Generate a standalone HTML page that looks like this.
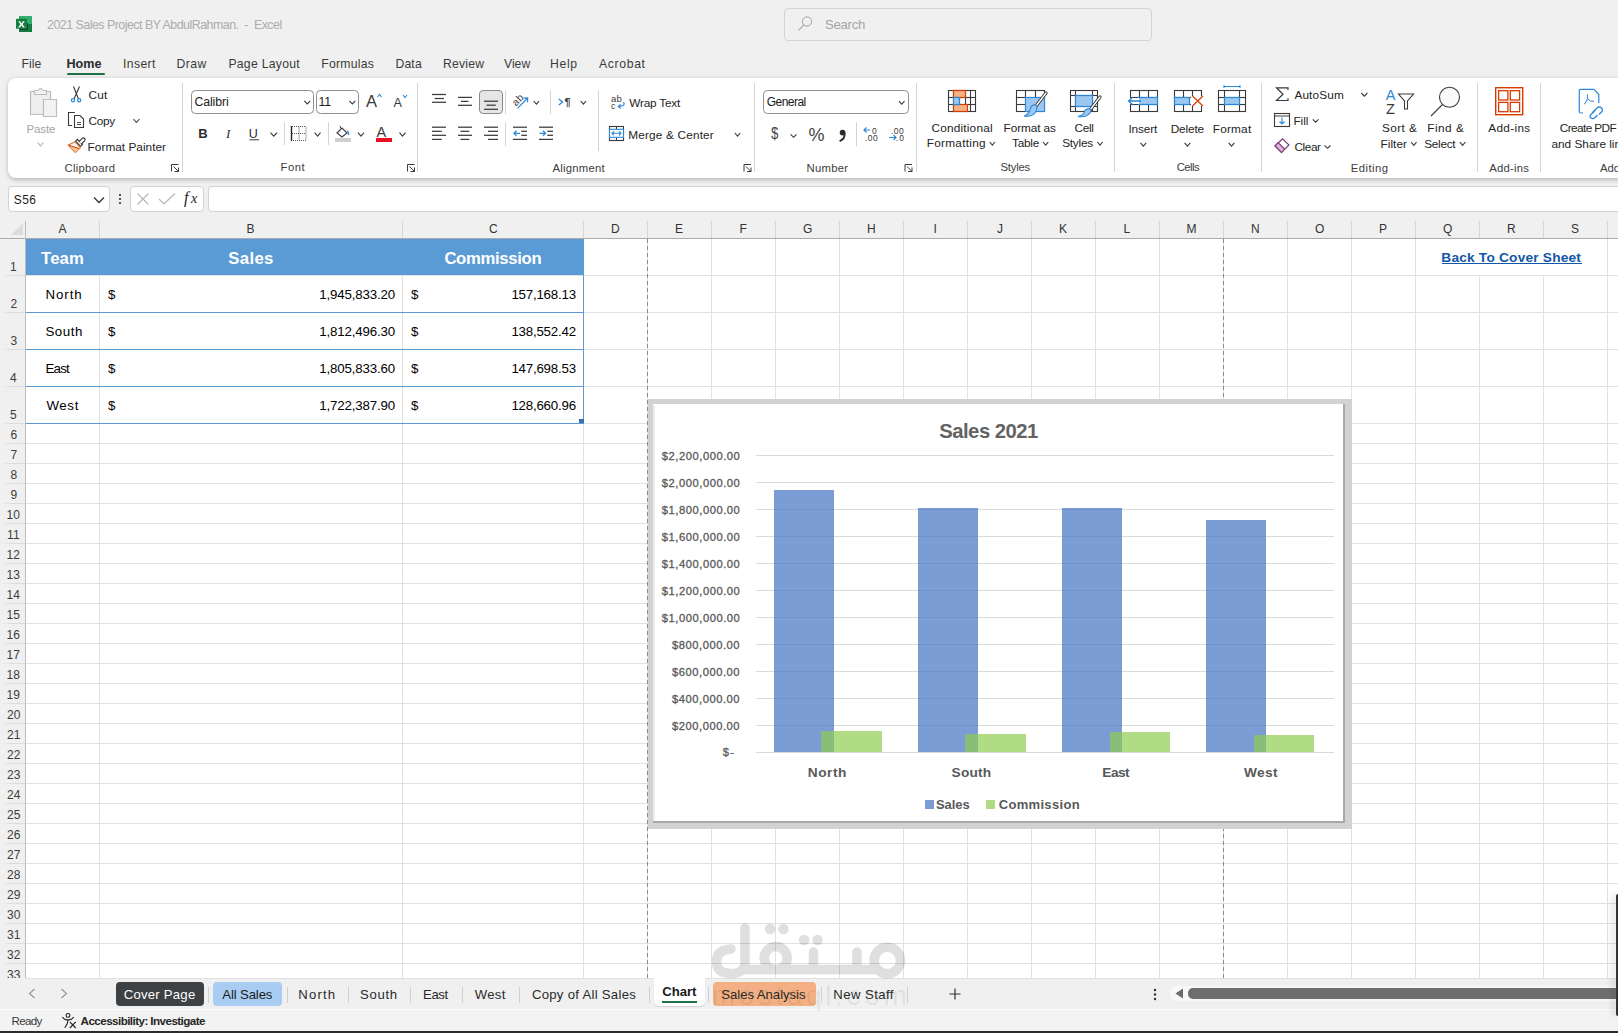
<!DOCTYPE html>
<html><head><meta charset="utf-8"><title>Excel</title>
<style>
html,body{margin:0;padding:0;width:1618px;height:1033px;overflow:hidden;background:#f0f0f0;}
.b{position:absolute;}
.t{position:absolute;white-space:pre;font-family:"Liberation Sans",sans-serif;}
</style></head><body>
<div class='b' style='left:0px;top:0px;width:1618px;height:1033px;background:#f0f0f0'></div>
<svg class='b' style='left:15px;top:15px;' width='18' height='18' viewBox='0 0 18 18'><rect x='4' y='1' width='13' height='16' fill='#107c41'/><rect x='4' y='1' width='13' height='8' fill='#33b06f'/><path d='M4.5 14.2 H12.2 V8' fill='none' stroke='#1f1f1f' stroke-width='1'/><rect x='1' y='3.8' width='11' height='10' rx='0.6' fill='#14803f'/><path d='M3.2 6.3 L5 6.3 L6.5 8.4 L8 6.3 L9.8 6.3 L7.5 9.3 L9.9 12.4 L8 12.4 L6.5 10.3 L5 12.4 L3.1 12.4 L5.5 9.3 Z' fill='#fff'/></svg>
<div class='b' style='left:784px;top:8px;width:368px;height:33px;border:1px solid #d4d4d4;border-radius:4px;box-sizing:border-box;background:#f0f0f0'></div>
<svg class='b' style='left:797px;top:16px;' width='16' height='16' viewBox='0 0 16 16'><circle cx='10' cy='5.5' r='4.6' fill='none' stroke='#a2a2a2' stroke-width='1'/><path d='M6.8 8.8 L1.5 14.5' stroke='#a2a2a2' stroke-width='1.1'/></svg>
<div class='b' style='left:67px;top:73px;width:38px;height:2px;background:#1e7145;border-radius:1px'></div>
<div class='b' style='left:8px;top:78px;width:1632px;height:100px;background:#fff;border-radius:8px;box-shadow:0 1.5px 4px rgba(0,0,0,0.22)'></div>
<div class='b' style='left:8px;top:186px;width:102px;height:26px;background:#fff;border:1px solid #d2d2d2;border-radius:4px;box-sizing:border-box'></div>
<svg class='b' style='left:93px;top:196px;' width='12' height='8' viewBox='0 0 12 8'><path d='M1 1.5 L6 6.5 L11 1.5' fill='none' stroke='#333' stroke-width='1.3'/></svg>
<svg class='b' style='left:117px;top:193px;' width='6' height='12' viewBox='0 0 6 12'><circle cx='3' cy='2' r='1.1' fill='#333'/><circle cx='3' cy='6' r='1.1' fill='#333'/><circle cx='3' cy='10' r='1.1' fill='#333'/></svg>
<div class='b' style='left:130px;top:186px;width:74px;height:26px;background:#fff;border:1px solid #d2d2d2;border-radius:4px;box-sizing:border-box'></div>
<svg class='b' style='left:136px;top:192px;' width='14' height='14' viewBox='0 0 14 14'><path d='M1.5 1.5 L12.5 12.5 M12.5 1.5 L1.5 12.5' stroke='#b5b5b5' stroke-width='1.1'/></svg>
<svg class='b' style='left:158px;top:192px;' width='18' height='14' viewBox='0 0 18 14'><path d='M1 7 L6 12 L17 1.5' fill='none' stroke='#b5b5b5' stroke-width='1.1'/></svg>
<div class='b' style='left:208px;top:186px;width:1432px;height:26px;background:#fff;border:1px solid #d2d2d2;border-radius:4px 0 0 4px;box-sizing:border-box'></div>
<div class='b' style='left:0px;top:212px;width:1618px;height:26px;background:#f0f0f0'></div>
<div class='b' style='left:26px;top:239px;width:1592px;height:739px;background:#fff'></div>
<div class='b' style='left:99px;top:239px;width:1px;height:739px;background:#e1e1e1'></div><div class='b' style='left:99px;top:221px;width:1px;height:17px;background:#d6d6d6'></div><div class='b' style='left:402px;top:239px;width:1px;height:739px;background:#e1e1e1'></div><div class='b' style='left:402px;top:221px;width:1px;height:17px;background:#d6d6d6'></div><div class='b' style='left:583px;top:239px;width:1px;height:739px;background:#e1e1e1'></div><div class='b' style='left:583px;top:221px;width:1px;height:17px;background:#d6d6d6'></div><div class='b' style='left:647px;top:239px;width:1px;height:739px;background:#e1e1e1'></div><div class='b' style='left:647px;top:221px;width:1px;height:17px;background:#d6d6d6'></div><div class='b' style='left:711px;top:239px;width:1px;height:739px;background:#e1e1e1'></div><div class='b' style='left:711px;top:221px;width:1px;height:17px;background:#d6d6d6'></div><div class='b' style='left:775px;top:239px;width:1px;height:739px;background:#e1e1e1'></div><div class='b' style='left:775px;top:221px;width:1px;height:17px;background:#d6d6d6'></div><div class='b' style='left:839px;top:239px;width:1px;height:739px;background:#e1e1e1'></div><div class='b' style='left:839px;top:221px;width:1px;height:17px;background:#d6d6d6'></div><div class='b' style='left:903px;top:239px;width:1px;height:739px;background:#e1e1e1'></div><div class='b' style='left:903px;top:221px;width:1px;height:17px;background:#d6d6d6'></div><div class='b' style='left:967px;top:239px;width:1px;height:739px;background:#e1e1e1'></div><div class='b' style='left:967px;top:221px;width:1px;height:17px;background:#d6d6d6'></div><div class='b' style='left:1031px;top:239px;width:1px;height:739px;background:#e1e1e1'></div><div class='b' style='left:1031px;top:221px;width:1px;height:17px;background:#d6d6d6'></div><div class='b' style='left:1095px;top:239px;width:1px;height:739px;background:#e1e1e1'></div><div class='b' style='left:1095px;top:221px;width:1px;height:17px;background:#d6d6d6'></div><div class='b' style='left:1159px;top:239px;width:1px;height:739px;background:#e1e1e1'></div><div class='b' style='left:1159px;top:221px;width:1px;height:17px;background:#d6d6d6'></div><div class='b' style='left:1223px;top:239px;width:1px;height:739px;background:#e1e1e1'></div><div class='b' style='left:1223px;top:221px;width:1px;height:17px;background:#d6d6d6'></div><div class='b' style='left:1287px;top:239px;width:1px;height:739px;background:#e1e1e1'></div><div class='b' style='left:1287px;top:221px;width:1px;height:17px;background:#d6d6d6'></div><div class='b' style='left:1351px;top:239px;width:1px;height:739px;background:#e1e1e1'></div><div class='b' style='left:1351px;top:221px;width:1px;height:17px;background:#d6d6d6'></div><div class='b' style='left:1415px;top:239px;width:1px;height:739px;background:#e1e1e1'></div><div class='b' style='left:1415px;top:221px;width:1px;height:17px;background:#d6d6d6'></div><div class='b' style='left:1479px;top:239px;width:1px;height:739px;background:#e1e1e1'></div><div class='b' style='left:1479px;top:221px;width:1px;height:17px;background:#d6d6d6'></div><div class='b' style='left:1543px;top:239px;width:1px;height:739px;background:#e1e1e1'></div><div class='b' style='left:1543px;top:221px;width:1px;height:17px;background:#d6d6d6'></div><div class='b' style='left:1607px;top:239px;width:1px;height:739px;background:#e1e1e1'></div><div class='b' style='left:1607px;top:221px;width:1px;height:17px;background:#d6d6d6'></div><div class='b' style='left:1671px;top:239px;width:1px;height:739px;background:#e1e1e1'></div><div class='b' style='left:1671px;top:221px;width:1px;height:17px;background:#d6d6d6'></div><div class='b' style='left:26px;top:275px;width:1592px;height:1px;background:#e1e1e1'></div><div class='b' style='left:3px;top:275px;width:22px;height:1px;background:linear-gradient(to right,rgba(225,225,225,0.3),#dcdcdc 40%)'></div><div class='b' style='left:26px;top:312px;width:1592px;height:1px;background:#e1e1e1'></div><div class='b' style='left:3px;top:312px;width:22px;height:1px;background:linear-gradient(to right,rgba(225,225,225,0.3),#dcdcdc 40%)'></div><div class='b' style='left:26px;top:349px;width:1592px;height:1px;background:#e1e1e1'></div><div class='b' style='left:3px;top:349px;width:22px;height:1px;background:linear-gradient(to right,rgba(225,225,225,0.3),#dcdcdc 40%)'></div><div class='b' style='left:26px;top:386px;width:1592px;height:1px;background:#e1e1e1'></div><div class='b' style='left:3px;top:386px;width:22px;height:1px;background:linear-gradient(to right,rgba(225,225,225,0.3),#dcdcdc 40%)'></div><div class='b' style='left:26px;top:423px;width:1592px;height:1px;background:#e1e1e1'></div><div class='b' style='left:3px;top:423px;width:22px;height:1px;background:linear-gradient(to right,rgba(225,225,225,0.3),#dcdcdc 40%)'></div><div class='b' style='left:26px;top:443px;width:1592px;height:1px;background:#e1e1e1'></div><div class='b' style='left:3px;top:443px;width:22px;height:1px;background:linear-gradient(to right,rgba(225,225,225,0.3),#dcdcdc 40%)'></div><div class='b' style='left:26px;top:463px;width:1592px;height:1px;background:#e1e1e1'></div><div class='b' style='left:3px;top:463px;width:22px;height:1px;background:linear-gradient(to right,rgba(225,225,225,0.3),#dcdcdc 40%)'></div><div class='b' style='left:26px;top:483px;width:1592px;height:1px;background:#e1e1e1'></div><div class='b' style='left:3px;top:483px;width:22px;height:1px;background:linear-gradient(to right,rgba(225,225,225,0.3),#dcdcdc 40%)'></div><div class='b' style='left:26px;top:503px;width:1592px;height:1px;background:#e1e1e1'></div><div class='b' style='left:3px;top:503px;width:22px;height:1px;background:linear-gradient(to right,rgba(225,225,225,0.3),#dcdcdc 40%)'></div><div class='b' style='left:26px;top:523px;width:1592px;height:1px;background:#e1e1e1'></div><div class='b' style='left:3px;top:523px;width:22px;height:1px;background:linear-gradient(to right,rgba(225,225,225,0.3),#dcdcdc 40%)'></div><div class='b' style='left:26px;top:543px;width:1592px;height:1px;background:#e1e1e1'></div><div class='b' style='left:3px;top:543px;width:22px;height:1px;background:linear-gradient(to right,rgba(225,225,225,0.3),#dcdcdc 40%)'></div><div class='b' style='left:26px;top:563px;width:1592px;height:1px;background:#e1e1e1'></div><div class='b' style='left:3px;top:563px;width:22px;height:1px;background:linear-gradient(to right,rgba(225,225,225,0.3),#dcdcdc 40%)'></div><div class='b' style='left:26px;top:583px;width:1592px;height:1px;background:#e1e1e1'></div><div class='b' style='left:3px;top:583px;width:22px;height:1px;background:linear-gradient(to right,rgba(225,225,225,0.3),#dcdcdc 40%)'></div><div class='b' style='left:26px;top:603px;width:1592px;height:1px;background:#e1e1e1'></div><div class='b' style='left:3px;top:603px;width:22px;height:1px;background:linear-gradient(to right,rgba(225,225,225,0.3),#dcdcdc 40%)'></div><div class='b' style='left:26px;top:623px;width:1592px;height:1px;background:#e1e1e1'></div><div class='b' style='left:3px;top:623px;width:22px;height:1px;background:linear-gradient(to right,rgba(225,225,225,0.3),#dcdcdc 40%)'></div><div class='b' style='left:26px;top:643px;width:1592px;height:1px;background:#e1e1e1'></div><div class='b' style='left:3px;top:643px;width:22px;height:1px;background:linear-gradient(to right,rgba(225,225,225,0.3),#dcdcdc 40%)'></div><div class='b' style='left:26px;top:663px;width:1592px;height:1px;background:#e1e1e1'></div><div class='b' style='left:3px;top:663px;width:22px;height:1px;background:linear-gradient(to right,rgba(225,225,225,0.3),#dcdcdc 40%)'></div><div class='b' style='left:26px;top:683px;width:1592px;height:1px;background:#e1e1e1'></div><div class='b' style='left:3px;top:683px;width:22px;height:1px;background:linear-gradient(to right,rgba(225,225,225,0.3),#dcdcdc 40%)'></div><div class='b' style='left:26px;top:703px;width:1592px;height:1px;background:#e1e1e1'></div><div class='b' style='left:3px;top:703px;width:22px;height:1px;background:linear-gradient(to right,rgba(225,225,225,0.3),#dcdcdc 40%)'></div><div class='b' style='left:26px;top:723px;width:1592px;height:1px;background:#e1e1e1'></div><div class='b' style='left:3px;top:723px;width:22px;height:1px;background:linear-gradient(to right,rgba(225,225,225,0.3),#dcdcdc 40%)'></div><div class='b' style='left:26px;top:743px;width:1592px;height:1px;background:#e1e1e1'></div><div class='b' style='left:3px;top:743px;width:22px;height:1px;background:linear-gradient(to right,rgba(225,225,225,0.3),#dcdcdc 40%)'></div><div class='b' style='left:26px;top:763px;width:1592px;height:1px;background:#e1e1e1'></div><div class='b' style='left:3px;top:763px;width:22px;height:1px;background:linear-gradient(to right,rgba(225,225,225,0.3),#dcdcdc 40%)'></div><div class='b' style='left:26px;top:783px;width:1592px;height:1px;background:#e1e1e1'></div><div class='b' style='left:3px;top:783px;width:22px;height:1px;background:linear-gradient(to right,rgba(225,225,225,0.3),#dcdcdc 40%)'></div><div class='b' style='left:26px;top:803px;width:1592px;height:1px;background:#e1e1e1'></div><div class='b' style='left:3px;top:803px;width:22px;height:1px;background:linear-gradient(to right,rgba(225,225,225,0.3),#dcdcdc 40%)'></div><div class='b' style='left:26px;top:823px;width:1592px;height:1px;background:#e1e1e1'></div><div class='b' style='left:3px;top:823px;width:22px;height:1px;background:linear-gradient(to right,rgba(225,225,225,0.3),#dcdcdc 40%)'></div><div class='b' style='left:26px;top:843px;width:1592px;height:1px;background:#e1e1e1'></div><div class='b' style='left:3px;top:843px;width:22px;height:1px;background:linear-gradient(to right,rgba(225,225,225,0.3),#dcdcdc 40%)'></div><div class='b' style='left:26px;top:863px;width:1592px;height:1px;background:#e1e1e1'></div><div class='b' style='left:3px;top:863px;width:22px;height:1px;background:linear-gradient(to right,rgba(225,225,225,0.3),#dcdcdc 40%)'></div><div class='b' style='left:26px;top:883px;width:1592px;height:1px;background:#e1e1e1'></div><div class='b' style='left:3px;top:883px;width:22px;height:1px;background:linear-gradient(to right,rgba(225,225,225,0.3),#dcdcdc 40%)'></div><div class='b' style='left:26px;top:903px;width:1592px;height:1px;background:#e1e1e1'></div><div class='b' style='left:3px;top:903px;width:22px;height:1px;background:linear-gradient(to right,rgba(225,225,225,0.3),#dcdcdc 40%)'></div><div class='b' style='left:26px;top:923px;width:1592px;height:1px;background:#e1e1e1'></div><div class='b' style='left:3px;top:923px;width:22px;height:1px;background:linear-gradient(to right,rgba(225,225,225,0.3),#dcdcdc 40%)'></div><div class='b' style='left:26px;top:943px;width:1592px;height:1px;background:#e1e1e1'></div><div class='b' style='left:3px;top:943px;width:22px;height:1px;background:linear-gradient(to right,rgba(225,225,225,0.3),#dcdcdc 40%)'></div><div class='b' style='left:26px;top:963px;width:1592px;height:1px;background:#e1e1e1'></div><div class='b' style='left:3px;top:963px;width:22px;height:1px;background:linear-gradient(to right,rgba(225,225,225,0.3),#dcdcdc 40%)'></div>
<div class='b' style='left:0px;top:238px;width:1618px;height:1px;background:#ababab'></div>
<div class='b' style='left:25px;top:221px;width:1px;height:757px;background:#bdbdbd'></div>
<svg class='b' style='left:10px;top:222px;' width='14' height='14' viewBox='0 0 14 14'><path d='M13 1 L13 13 L1 13 Z' fill='#dcdcdc'/></svg>
<div class='b' style='left:647px;top:239px;width:1px;height:739px;background:repeating-linear-gradient(to bottom,#8a8a8a 0 4px,transparent 4px 7px)'></div>
<div class='b' style='left:1223px;top:239px;width:1px;height:739px;background:repeating-linear-gradient(to bottom,#8a8a8a 0 4px,transparent 4px 7px)'></div>
<div class='b' style='left:26px;top:239px;width:558px;height:36px;background:#5b9bd5'></div>
<div class='b' style='left:26px;top:312px;width:558px;height:1px;background:#5b9bd5'></div>
<div class='b' style='left:26px;top:349px;width:558px;height:1px;background:#5b9bd5'></div>
<div class='b' style='left:26px;top:386px;width:558px;height:1px;background:#5b9bd5'></div>
<div class='b' style='left:26px;top:423px;width:558px;height:1px;background:#5b9bd5'></div>
<div class='b' style='left:583px;top:239px;width:1px;height:185px;background:#5b9bd5'></div>
<div class='b' style='left:579px;top:419px;width:5px;height:4px;background:#3b6fb6'></div>
<div class='b' style='left:1416px;top:239px;width:191px;height:36px;background:#fff'></div>
<div class='b' style='left:1442px;top:263px;width:140px;height:1px;background:#1257a8'></div>
<div class='b' style='left:648px;top:399px;width:704px;height:430px;background:#d2d2d2'></div>
<div class='b' style='left:653px;top:404px;width:692px;height:419px;background:#a9a9a9'></div>
<div class='b' style='left:653px;top:404px;width:690px;height:417px;background:#fff'></div>
<div class='b' style='left:653px;top:405px;width:2px;height:416px;background:#ececec'></div>
<div class='b' style='left:756px;top:752px;width:578px;height:1px;background:#d9d9d9'></div>
<div class='b' style='left:756px;top:725px;width:578px;height:1px;background:#d9d9d9'></div>
<div class='b' style='left:756px;top:698px;width:578px;height:1px;background:#d9d9d9'></div>
<div class='b' style='left:756px;top:671px;width:578px;height:1px;background:#d9d9d9'></div>
<div class='b' style='left:756px;top:644px;width:578px;height:1px;background:#d9d9d9'></div>
<div class='b' style='left:756px;top:617px;width:578px;height:1px;background:#d9d9d9'></div>
<div class='b' style='left:756px;top:590px;width:578px;height:1px;background:#d9d9d9'></div>
<div class='b' style='left:756px;top:563px;width:578px;height:1px;background:#d9d9d9'></div>
<div class='b' style='left:756px;top:536px;width:578px;height:1px;background:#d9d9d9'></div>
<div class='b' style='left:756px;top:509px;width:578px;height:1px;background:#d9d9d9'></div>
<div class='b' style='left:756px;top:482px;width:578px;height:1px;background:#d9d9d9'></div>
<div class='b' style='left:756px;top:455px;width:578px;height:1px;background:#d9d9d9'></div>
<div class='b' style='left:773.7px;top:489.5px;width:60px;height:262.7px;background:rgba(68,114,196,0.7)'></div>
<div class='b' style='left:821.1px;top:731.0px;width:60.6px;height:21.2px;background:rgba(141,205,80,0.7)'></div>
<div class='b' style='left:917.9px;top:507.5px;width:60px;height:244.7px;background:rgba(68,114,196,0.7)'></div>
<div class='b' style='left:965.3px;top:733.5px;width:60.6px;height:18.7px;background:rgba(141,205,80,0.7)'></div>
<div class='b' style='left:1062.1px;top:508.4px;width:60px;height:243.8px;background:rgba(68,114,196,0.7)'></div>
<div class='b' style='left:1109.5px;top:732.3px;width:60.6px;height:19.9px;background:rgba(141,205,80,0.7)'></div>
<div class='b' style='left:1206.3px;top:519.7px;width:60px;height:232.5px;background:rgba(68,114,196,0.7)'></div>
<div class='b' style='left:1253.7px;top:734.8px;width:60.6px;height:17.4px;background:rgba(141,205,80,0.7)'></div>
<div class='b' style='left:925px;top:800px;width:9px;height:9px;background:rgba(68,114,196,0.7)'></div>
<div class='b' style='left:986px;top:800px;width:9px;height:9px;background:rgba(141,205,80,0.7)'></div>
<div class='b' style='left:0px;top:978px;width:1618px;height:31px;background:#f0f0f0;z-index:2'></div>
<div class='b' style='left:26px;top:978px;width:1592px;height:1px;background:#e0e0e0;z-index:2'></div>
<svg class='b' style='left:27px;top:988px;z-index:3' width='10' height='11' viewBox='0 0 10 11'><path d='M7.5 1 L2.5 5.5 L7.5 10' fill='none' stroke='#9a9a9a' stroke-width='1.2'/></svg>
<svg class='b' style='left:59px;top:988px;z-index:3' width='10' height='11' viewBox='0 0 10 11'><path d='M2.5 1 L7.5 5.5 L2.5 10' fill='none' stroke='#9a9a9a' stroke-width='1.2'/></svg>
<div class='b' style='left:116px;top:982px;width:88px;height:24px;background:#3d4143;border-radius:4px;z-index:3'></div>
<div class='b' style='left:213px;top:982px;width:69px;height:24px;background:#a9cdf2;border-radius:4px;z-index:3'></div>
<div class='b' style='left:208px;top:987px;width:1px;height:16px;background:#d0d0d0;z-index:3'></div>
<div class='b' style='left:287px;top:987px;width:1px;height:16px;background:#d0d0d0;z-index:3'></div>
<div class='b' style='left:348px;top:987px;width:1px;height:16px;background:#d0d0d0;z-index:3'></div>
<div class='b' style='left:410px;top:987px;width:1px;height:16px;background:#d0d0d0;z-index:3'></div>
<div class='b' style='left:462px;top:987px;width:1px;height:16px;background:#d0d0d0;z-index:3'></div>
<div class='b' style='left:519px;top:987px;width:1px;height:16px;background:#d0d0d0;z-index:3'></div>
<div class='b' style='left:649px;top:987px;width:1px;height:16px;background:#d0d0d0;z-index:3'></div>
<div class='b' style='left:708px;top:987px;width:1px;height:16px;background:#d0d0d0;z-index:3'></div>
<div class='b' style='left:821px;top:987px;width:1px;height:16px;background:#d0d0d0;z-index:3'></div>
<div class='b' style='left:907px;top:987px;width:1px;height:16px;background:#d0d0d0;z-index:3'></div>
<div class='b' style='left:654px;top:978px;width:51px;height:28px;background:#fff;border-radius:0 0 5px 5px;box-shadow:0 1px 1px rgba(0,0,0,0.12);z-index:3'></div>
<div class='b' style='left:662px;top:1001px;width:35px;height:2px;background:#1e7145;z-index:3'></div>
<div class='b' style='left:713px;top:982px;width:103px;height:24px;background:#f4b084;border-radius:4px;z-index:3'></div>
<svg class='b' style='left:949px;top:988px;z-index:3' width='12' height='12' viewBox='0 0 12 12'><path d='M6 0.5 V11.5 M0.5 6 H11.5' stroke='#333' stroke-width='1.2'/></svg>
<svg class='b' style='left:1152px;top:988px;z-index:3' width='6' height='13' viewBox='0 0 6 13'><circle cx='3' cy='2' r='1.2' fill='#333'/><circle cx='3' cy='6.5' r='1.2' fill='#333'/><circle cx='3' cy='11' r='1.2' fill='#333'/></svg>
<div class='b' style='left:1170px;top:986px;width:448px;height:15px;background:#f7f7f7;border-radius:7px 0 0 7px;z-index:3'></div>
<svg class='b' style='left:1175px;top:988px;z-index:3' width='9' height='11' viewBox='0 0 9 11'><path d='M8 0.5 L8 10.5 L0.5 5.5 Z' fill='#6a6a6a'/></svg>
<div class='b' style='left:1188px;top:988px;width:430px;height:11px;background:#6e6e6e;border-radius:5px 0 0 5px;z-index:3'></div>
<div class='b' style='left:0px;top:1009px;width:1618px;height:22px;background:#f3f3f3;z-index:2'></div>
<div class='b' style='left:0px;top:1031px;width:1618px;height:2px;background:#2b2b2b;z-index:3'></div>
<div class='b' style='left:0px;top:1009px;width:1618px;height:1px;background:#fbfbfb;z-index:3'></div>
<svg class='b' style='left:0px;top:1000px;z-index:3' width='100' height='33' viewBox='0 1000 100 33'><circle cx='68' cy='1015.4' r='1.9' fill='none' stroke='#222' stroke-width='1.1'/><path d='M62.3 1017.2 Q65 1020.5 68 1019.8 Q71 1020.5 73.7 1017.2 M68 1019.8 L67.3 1023.5 L64.8 1027.8' fill='none' stroke='#222' stroke-width='1.1'/><path d='M69.8 1021.8 L75.8 1028 M75.8 1021.8 L69.8 1028' stroke='#222' stroke-width='1.1'/></svg>
<div class='b' style='left:1616px;top:894px;width:2px;height:122px;background:#333;border-radius:2px 0 0 2px;box-shadow:-3px 0 6px rgba(0,0,0,0.25);z-index:3'></div>
<svg class='b' style='left:0;top:0;z-index:6;pointer-events:none' width='1618' height='1033' viewBox='0 0 1618 1033'><g opacity='0.12'><g fill='none' stroke='#000' stroke-width='9.5' stroke-linecap='round' stroke-linejoin='round'><circle cx='887.3' cy='960.5' r='13.2'/><path d='M876 969.5 H745'/><path d='M813.5 969 V952 M857 969 V952'/><circle cx='775.7' cy='958' r='11.5'/><path d='M745 928 V962 Q745 973.5 731 973.5 Q716.5 973.5 716.5 961.5 Q716.5 950 731 949'/></g><g fill='#000'><circle cx='804.2' cy='940' r='5.3'/><circle cx='817.6' cy='940' r='5.3'/><circle cx='770.1' cy='929' r='5.3'/><circle cx='783.4' cy='929' r='5.3'/></g></g></svg>
<svg class='b' style='left:0;top:0' width='1618' height='1033' viewBox='0 0 1618 1033'><rect x='182' y='83' width='1' height='89' fill='#d4d4d4'/><rect x='417' y='83' width='1' height='89' fill='#d4d4d4'/><rect x='754' y='83' width='1' height='89' fill='#d4d4d4'/><rect x='916' y='83' width='1' height='89' fill='#d4d4d4'/><rect x='1114' y='83' width='1' height='89' fill='#d4d4d4'/><rect x='1261' y='83' width='1' height='89' fill='#d4d4d4'/><rect x='1477' y='83' width='1' height='89' fill='#d4d4d4'/><rect x='1540' y='83' width='1' height='89' fill='#d4d4d4'/><rect x='284' y='122' width='1' height='23' fill='#d4d4d4'/><rect x='328' y='122' width='1' height='23' fill='#d4d4d4'/><rect x='505' y='90' width='1' height='24' fill='#d4d4d4'/><rect x='505' y='122' width='1' height='24' fill='#d4d4d4'/><rect x='550' y='90' width='1' height='24' fill='#d4d4d4'/><rect x='598' y='90' width='1' height='61' fill='#d4d4d4'/><rect x='856' y='122' width='1' height='24' fill='#d4d4d4'/><path d='M171.5 171.5 L171.5 164.5 L178.5 164.5' fill='none' stroke='#3a3a3a' stroke-width='1'/><path d='M173.5 166.5 L178.5 171.5 M178.5 167.5 L178.5 171.5 L174.5 171.5' fill='none' stroke='#3a3a3a' stroke-width='1'/><path d='M407.5 171.5 L407.5 164.5 L414.5 164.5' fill='none' stroke='#3a3a3a' stroke-width='1'/><path d='M409.5 166.5 L414.5 171.5 M414.5 167.5 L414.5 171.5 L410.5 171.5' fill='none' stroke='#3a3a3a' stroke-width='1'/><path d='M744.0 171.5 L744.0 164.5 L751.0 164.5' fill='none' stroke='#3a3a3a' stroke-width='1'/><path d='M746.0 166.5 L751.0 171.5 M751.0 167.5 L751.0 171.5 L747.0 171.5' fill='none' stroke='#3a3a3a' stroke-width='1'/><path d='M905.0 171.5 L905.0 164.5 L912.0 164.5' fill='none' stroke='#3a3a3a' stroke-width='1'/><path d='M907.0 166.5 L912.0 171.5 M912.0 167.5 L912.0 171.5 L908.0 171.5' fill='none' stroke='#3a3a3a' stroke-width='1'/><path d='M30.5 91.5 H50.5 V114.5 H30.5 Z' fill='#eeeeee' stroke='#bdbdbd' stroke-width='1.2'/><path d='M34.5 94.5 V90.5 H38 Q40.5 86.5 43 90.5 H46.5 V94.5 Z' fill='#f2f2f2' stroke='#bdbdbd' stroke-width='1.2'/><path d='M43.5 99.5 H56.5 V116.5 H43.5 Z' fill='#f2f2f2' stroke='#bdbdbd' stroke-width='1.2'/><path d='M37.7 142.7 L40.5 146 L43.3 142.7' fill='none' stroke='#b0b0b0' stroke-width='1.1'/><path d='M73.5 86.5 L78.5 99 M79.5 86.5 L74 99' stroke='#3a3a3a' stroke-width='1.1' fill='none'/><circle cx='73' cy='100.3' r='1.6' fill='none' stroke='#2b88d8' stroke-width='1.2'/><circle cx='79.2' cy='100.3' r='1.6' fill='none' stroke='#2b88d8' stroke-width='1.2'/><path d='M72 125.5 H68.5 V112.5 H75' fill='none' stroke='#3a3a3a' stroke-width='1.1'/><path d='M74.5 115.5 H80 L83.5 119 V127.5 H74.5 Z' fill='#fff' stroke='#3a3a3a' stroke-width='1.1'/><path d='M77 122.5 L81 122.5' stroke='#3a3a3a' stroke-width='0.9' fill='none'/><path d='M77 124.5 L81 124.5' stroke='#3a3a3a' stroke-width='0.9' fill='none'/><path d='M133.5 119 L136.45 122.5 L139.4 119' fill='none' stroke='#3a3a3a' stroke-width='1.1'/><path d='M68.3 145.1 L74.9 141.9 L80.4 147.8 L75.3 152.5 Z' fill='#fff' stroke='#e07a2a' stroke-width='1.1'/><path d='M70.5 146.2 L79.6 148.3 L75.3 152 Z' fill='#f6c79b'/><path d='M68.6 145.3 L79 148.6' stroke='#d83b01' stroke-width='1.1'/><path d='M75.6 141.1 L77.4 139.3 L82.4 144.5 L80.6 146.3 Z' fill='#fff' stroke='#333' stroke-width='1.1'/><path d='M79 141.6 L82.2 138.4 Q83.4 137.3 84.6 138.5 Q85.7 139.6 84.6 140.8 L81.4 144' fill='#fff' stroke='#333' stroke-width='1.1'/><rect x='191.5' y='90.5' width='122' height='23' rx='4' fill='#fff' stroke='#8f8f8f' stroke-width='1'/><rect x='316.5' y='90.5' width='42' height='23' rx='4' fill='#fff' stroke='#8f8f8f' stroke-width='1'/><path d='M304.3 100.8 L307.25 103.9 L310.2 100.8' fill='none' stroke='#3a3a3a' stroke-width='1.1'/><path d='M349.4 100.8 L352.35 103.9 L355.3 100.8' fill='none' stroke='#3a3a3a' stroke-width='1.1'/><path d='M377.5 97 L379.5 94.5 L381.5 97' fill='none' stroke='#2b88d8' stroke-width='1.1'/><path d='M403 95 L405 97.5 L407 95' fill='none' stroke='#2b88d8' stroke-width='1.1'/><path d='M249.5 139.8 L259 139.8' stroke='#3a3a3a' stroke-width='1' fill='none'/><path d='M270.5 132.7 L273.75 136.2 L277 132.7' fill='none' stroke='#3a3a3a' stroke-width='1.1'/><path d='M314.7 132.7 L317.6 136.2 L320.5 132.7' fill='none' stroke='#3a3a3a' stroke-width='1.1'/><path d='M358 132.7 L361.0 136.2 L364 132.7' fill='none' stroke='#3a3a3a' stroke-width='1.1'/><path d='M399.5 132.7 L402.5 136.2 L405.5 132.7' fill='none' stroke='#3a3a3a' stroke-width='1.1'/><path d='M291.5 126 V141' stroke='#222' stroke-width='1.4'/><path d='M292 126.5 H306 V140.5 H292 M299 126.5 V140.5 M292 133.5 H306' fill='none' stroke='#555' stroke-width='1' stroke-dasharray='1 1'/><path d='M337 133 L342 128 L347 133 L342 137 Z' fill='#fff' stroke='#3a3a3a' stroke-width='1.1'/><path d='M341 128.5 L340 126' stroke='#3a3a3a' stroke-width='1'/><path d='M347 131 Q349 132 348.5 135' fill='none' stroke='#2b88d8' stroke-width='1.3'/><rect x='335' y='138' width='16.0' height='4.0' fill='#d0d0d0'/><rect x='376' y='138' width='16.0' height='4.0' fill='#e81123'/><path d='M432 94.5 L446 94.5' stroke='#3a3a3a' stroke-width='1.25' fill='none'/><path d='M434.7 98.5 L443.9 98.5' stroke='#3a3a3a' stroke-width='1.25' fill='none'/><path d='M432 102.3 L446 102.3' stroke='#3a3a3a' stroke-width='1.25' fill='none'/><path d='M458 97.4 L472 97.4' stroke='#3a3a3a' stroke-width='1.25' fill='none'/><path d='M461 101.4 L468.5 101.4' stroke='#3a3a3a' stroke-width='1.25' fill='none'/><path d='M458 105.3 L472 105.3' stroke='#3a3a3a' stroke-width='1.25' fill='none'/><rect x='479.5' y='90.5' width='23' height='23' rx='3.5' fill='#e6e6e6' stroke='#8a8a8a' stroke-width='1'/><path d='M484 101.2 L498 101.2' stroke='#3a3a3a' stroke-width='1.25' fill='none'/><path d='M486.5 105.2 L495.8 105.2' stroke='#3a3a3a' stroke-width='1.25' fill='none'/><path d='M484 109.3 L498 109.3' stroke='#3a3a3a' stroke-width='1.25' fill='none'/><path d='M517.5 108.3 L527.7 98 M523.5 98.2 L527.7 98 L527.5 102.2' fill='none' stroke='#2b88d8' stroke-width='1.2'/><path d='M533.7 101 L536.4000000000001 104.2 L539.1 101' fill='none' stroke='#3a3a3a' stroke-width='1.1'/><path d='M558.8 99 L562.5 102 L558.8 105' fill='none' stroke='#2b88d8' stroke-width='1.3'/><path d='M580.7 101 L583.4000000000001 104.2 L586.1 101' fill='none' stroke='#3a3a3a' stroke-width='1.1'/><path d='M432 127.2 L446 127.2' stroke='#3a3a3a' stroke-width='1.25' fill='none'/><path d='M458 127.2 L472 127.2' stroke='#3a3a3a' stroke-width='1.25' fill='none'/><path d='M484 127.2 L498 127.2' stroke='#3a3a3a' stroke-width='1.25' fill='none'/><path d='M432 131.3 L441.7 131.3' stroke='#3a3a3a' stroke-width='1.25' fill='none'/><path d='M460.5 131.3 L469.3 131.3' stroke='#3a3a3a' stroke-width='1.25' fill='none'/><path d='M488 131.3 L498 131.3' stroke='#3a3a3a' stroke-width='1.25' fill='none'/><path d='M432 135.3 L446 135.3' stroke='#3a3a3a' stroke-width='1.25' fill='none'/><path d='M458 135.3 L472 135.3' stroke='#3a3a3a' stroke-width='1.25' fill='none'/><path d='M484 135.3 L498 135.3' stroke='#3a3a3a' stroke-width='1.25' fill='none'/><path d='M432 139.4 L441.7 139.4' stroke='#3a3a3a' stroke-width='1.25' fill='none'/><path d='M460.5 139.4 L469.3 139.4' stroke='#3a3a3a' stroke-width='1.25' fill='none'/><path d='M488 139.4 L498 139.4' stroke='#3a3a3a' stroke-width='1.25' fill='none'/><path d='M513 127.2 L527 127.2' stroke='#3a3a3a' stroke-width='1.25' fill='none'/><path d='M521.3 131.3 L527 131.3' stroke='#3a3a3a' stroke-width='1.25' fill='none'/><path d='M521.3 135.3 L527 135.3' stroke='#3a3a3a' stroke-width='1.25' fill='none'/><path d='M513 139.4 L527 139.4' stroke='#3a3a3a' stroke-width='1.25' fill='none'/><path d='M520 133.3 H514 M516.5 130.8 L514 133.3 L516.5 135.8' fill='none' stroke='#2b88d8' stroke-width='1.3'/><path d='M539 127.2 L553 127.2' stroke='#3a3a3a' stroke-width='1.25' fill='none'/><path d='M547.3 131.3 L553 131.3' stroke='#3a3a3a' stroke-width='1.25' fill='none'/><path d='M547.3 135.3 L553 135.3' stroke='#3a3a3a' stroke-width='1.25' fill='none'/><path d='M539 139.4 L553 139.4' stroke='#3a3a3a' stroke-width='1.25' fill='none'/><path d='M539.5 133.3 H545.5 M543 130.8 L545.5 133.3 L543 135.8' fill='none' stroke='#2b88d8' stroke-width='1.3'/><path d='M623.5 102 Q626 106 619 106.5 M620.8 104.3 L618.3 106.4 L620.8 108.6' fill='none' stroke='#2b88d8' stroke-width='1.2'/><rect x='609.5' y='126.5' width='14' height='14' rx='0' fill='none' stroke='#3a3a3a' stroke-width='1.1'/><path d='M616.5 126.5 L616.5 140.5' stroke='#3a3a3a' stroke-width='1' fill='none'/><rect x='609' y='129' width='15.0' height='9.0' fill='#fff'/><rect x='609.5' y='129.3' width='14' height='8' rx='0' fill='#fff' stroke='#2b88d8' stroke-width='1.1'/><path d='M612 133.3 H621 M614 131.3 L612 133.3 L614 135.3 M619 131.3 L621 133.3 L619 135.3' fill='none' stroke='#2b88d8' stroke-width='1.1'/><path d='M734.8 133 L737.55 136.2 L740.3 133' fill='none' stroke='#3a3a3a' stroke-width='1.1'/><rect x='763.5' y='90.5' width='145' height='23' rx='4' fill='#fff' stroke='#8f8f8f' stroke-width='1'/><path d='M899 101.2 L901.75 104.2 L904.5 101.2' fill='none' stroke='#3a3a3a' stroke-width='1.1'/><path d='M790.6 134.3 L793.55 137.3 L796.5 134.3' fill='none' stroke='#3a3a3a' stroke-width='1.1'/><circle cx='842.6' cy='132.6' r='2.9' fill='#2b2b2b'/><path d='M844.6 133.2 Q845.2 139 839.6 141.2' fill='none' stroke='#2b2b2b' stroke-width='1.9'/><path d='M870 130 H864 M866.5 127.5 L864 130 L866.5 132.5' fill='none' stroke='#2b88d8' stroke-width='1.2'/><path d='M889 137.5 H896 M893.5 135 L896 137.5 L893.5 140' fill='none' stroke='#2b88d8' stroke-width='1.2'/><rect x='948.5' y='90.5' width='27.0' height='21.0' rx='0' fill='none' stroke='#3a3a3a' stroke-width='1.1'/><path d='M953.5 90.5 L953.5 111.5' stroke='#3a3a3a' stroke-width='1.1' fill='none'/><path d='M959.5 90.5 L959.5 111.5' stroke='#3a3a3a' stroke-width='1.1' fill='none'/><path d='M965.5 90.5 L965.5 111.5' stroke='#3a3a3a' stroke-width='1.1' fill='none'/><path d='M970.5 90.5 L970.5 111.5' stroke='#3a3a3a' stroke-width='1.1' fill='none'/><path d='M948.5 97.5 L975.5 97.5' stroke='#3a3a3a' stroke-width='1.1' fill='none'/><path d='M948.5 104.5 L975.5 104.5' stroke='#3a3a3a' stroke-width='1.1' fill='none'/><rect x='953.5' y='90.5' width='12' height='7' fill='#f4b183' stroke='#d83b01' stroke-width='1.2'/><rect x='953.5' y='104.5' width='14' height='7' fill='#f4b183' stroke='#d83b01' stroke-width='1.2'/><rect x='953.5' y='97.5' width='6' height='7' fill='#9cc7f0' stroke='#2b88d8' stroke-width='1.2'/><rect x='1016.5' y='90.5' width='28.0' height='21.0' rx='0' fill='none' stroke='#3a3a3a' stroke-width='1.1'/><path d='M1025.5 90.5 L1025.5 111.5' stroke='#3a3a3a' stroke-width='1.1' fill='none'/><path d='M1035.5 90.5 L1035.5 111.5' stroke='#3a3a3a' stroke-width='1.1' fill='none'/><path d='M1016.5 97.5 L1044.5 97.5' stroke='#3a3a3a' stroke-width='1.1' fill='none'/><path d='M1016.5 104.5 L1044.5 104.5' stroke='#3a3a3a' stroke-width='1.1' fill='none'/><rect x='1025.5' y='97.5' width='19' height='14' fill='#9cc7f0' stroke='#2b88d8' stroke-width='1.1'/><path d='M1046 93 L1036 106' stroke='#3a3a3a' stroke-width='3.2' stroke-linecap='round'/><path d='M1046 93 L1036 106' stroke='#fff' stroke-width='1.3' stroke-linecap='round'/><path d='M1036 105 Q1031 104 1030 110 Q1028 115 1024 116 Q1032 117 1035 113 Q1038 109 1036 105 Z' fill='#9cc7f0' stroke='#2b88d8' stroke-width='1.1'/><rect x='1070.5' y='90.5' width='27.0' height='21.0' rx='0' fill='none' stroke='#3a3a3a' stroke-width='1.1'/><path d='M1075.5 90.5 L1075.5 111.5' stroke='#3a3a3a' stroke-width='1.1' fill='none'/><path d='M1092.5 90.5 L1092.5 111.5' stroke='#3a3a3a' stroke-width='1.1' fill='none'/><path d='M1070.5 95.5 L1097.5 95.5' stroke='#3a3a3a' stroke-width='1.1' fill='none'/><path d='M1070.5 106.5 L1097.5 106.5' stroke='#3a3a3a' stroke-width='1.1' fill='none'/><rect x='1075.5' y='95.5' width='17' height='11' fill='#9cc7f0' stroke='#2b88d8' stroke-width='1.2'/><path d='M1100 97 L1090 110' stroke='#3a3a3a' stroke-width='3.2' stroke-linecap='round'/><path d='M1100 97 L1090 110' stroke='#fff' stroke-width='1.3' stroke-linecap='round'/><path d='M1090 109 Q1085 108 1084 113 Q1082 116 1078 116.5 Q1086 117.5 1089 114 Q1092 111 1090 109 Z' fill='#9cc7f0' stroke='#2b88d8' stroke-width='1.1'/><path d='M989.7 142 L992.35 145.2 L995 142' fill='none' stroke='#3a3a3a' stroke-width='1.1'/><path d='M1043 142 L1045.65 145.2 L1048.3 142' fill='none' stroke='#3a3a3a' stroke-width='1.1'/><path d='M1097.4 142 L1100.0500000000002 145.2 L1102.7 142' fill='none' stroke='#3a3a3a' stroke-width='1.1'/><rect x='1130.5' y='90.5' width='27.0' height='21.0' rx='0' fill='none' stroke='#3a3a3a' stroke-width='1.1'/><path d='M1139.5 90.5 L1139.5 111.5' stroke='#3a3a3a' stroke-width='1.1' fill='none'/><path d='M1148.5 90.5 L1148.5 111.5' stroke='#3a3a3a' stroke-width='1.1' fill='none'/><path d='M1130.5 97.5 L1157.5 97.5' stroke='#3a3a3a' stroke-width='1.1' fill='none'/><path d='M1130.5 104.5 L1157.5 104.5' stroke='#3a3a3a' stroke-width='1.1' fill='none'/><rect x='1138.5' y='97.5' width='19' height='7' fill='#9cc7f0' stroke='#2b88d8' stroke-width='1.2'/><rect x='1128' y='98' width='11.0' height='6.0' fill='#fff'/><path d='M1141 101 H1129 M1133 97 L1128.5 101 L1133 105' fill='none' stroke='#2b88d8' stroke-width='1.3'/><rect x='1174.5' y='90.5' width='27.0' height='21.0' rx='0' fill='none' stroke='#3a3a3a' stroke-width='1.1'/><path d='M1183.5 90.5 L1183.5 111.5' stroke='#3a3a3a' stroke-width='1.1' fill='none'/><path d='M1192.5 90.5 L1192.5 111.5' stroke='#3a3a3a' stroke-width='1.1' fill='none'/><path d='M1174.5 97.5 L1201.5 97.5' stroke='#3a3a3a' stroke-width='1.1' fill='none'/><path d='M1174.5 104.5 L1201.5 104.5' stroke='#3a3a3a' stroke-width='1.1' fill='none'/><rect x='1174.5' y='97.5' width='15' height='7' fill='#9cc7f0' stroke='#2b88d8' stroke-width='1.2'/><rect x='1191' y='96' width='13.0' height='10.0' fill='#fff'/><path d='M1192.5 96 L1203 106 M1203 96 L1192.5 106' stroke='#d83b01' stroke-width='1.2'/><rect x='1218.5' y='90.5' width='27.0' height='21.0' rx='0' fill='none' stroke='#3a3a3a' stroke-width='1.1'/><path d='M1224.5 90.5 L1224.5 111.5' stroke='#3a3a3a' stroke-width='1.1' fill='none'/><path d='M1239.5 90.5 L1239.5 111.5' stroke='#3a3a3a' stroke-width='1.1' fill='none'/><path d='M1218.5 97.5 L1245.5 97.5' stroke='#3a3a3a' stroke-width='1.1' fill='none'/><path d='M1218.5 104.5 L1245.5 104.5' stroke='#3a3a3a' stroke-width='1.1' fill='none'/><rect x='1224.5' y='97.5' width='15' height='7' fill='#9cc7f0' stroke='#2b88d8' stroke-width='1.2'/><path d='M1224 86.5 H1240 M1224 85 V88 M1240 85 V88' fill='none' stroke='#2b88d8' stroke-width='1.1'/><path d='M1140.5 142.9 L1143.35 146.2 L1146.2 142.9' fill='none' stroke='#3a3a3a' stroke-width='1.1'/><path d='M1184.6 142.9 L1187.4499999999998 146.2 L1190.3 142.9' fill='none' stroke='#3a3a3a' stroke-width='1.1'/><path d='M1228.7 142.9 L1231.5500000000002 146.2 L1234.4 142.9' fill='none' stroke='#3a3a3a' stroke-width='1.1'/><path d='M1288 90 V87.8 H1276.5 L1283 94.2 L1276.5 100.5 H1288 V98.3' fill='none' stroke='#3a3a3a' stroke-width='1.2'/><path d='M1361.3 93 L1364.35 96.2 L1367.4 93' fill='none' stroke='#3a3a3a' stroke-width='1.1'/><rect x='1274.5' y='113.5' width='15' height='13' rx='0' fill='none' stroke='#3a3a3a' stroke-width='1.1'/><path d='M1274.5 116 L1289.5 116' stroke='#3a3a3a' stroke-width='1' fill='none'/><path d='M1282 117.5 V124 M1279.5 121.5 L1282 124 L1284.5 121.5' fill='none' stroke='#2b88d8' stroke-width='1.1'/><path d='M1312.8 119.4 L1315.65 122.2 L1318.5 119.4' fill='none' stroke='#3a3a3a' stroke-width='1.1'/><path d='M1275 146 L1282.5 138.8 L1289 145 L1281.5 152.5 Z' fill='#fff' stroke='#7e3878' stroke-width='1.1'/><path d='M1275 146 L1278.2 142.6 L1284.7 149 L1281.5 152.5 Z' fill='#d9b8d6' stroke='#7e3878' stroke-width='1.1'/><path d='M1324.6 145.5 L1327.55 148.3 L1330.5 145.5' fill='none' stroke='#3a3a3a' stroke-width='1.1'/><path d='M1398.5 94 H1413.5 L1407.5 101 V109 H1404.5 V101 Z' fill='none' stroke='#3a3a3a' stroke-width='1.1'/><circle cx='1449.5' cy='97.3' r='10' fill='#fafafa' stroke='#3a3a3a' stroke-width='1.1'/><path d='M1442.5 104.5 L1431 116' stroke='#3a3a3a' stroke-width='1.1'/><path d='M1411.2 142.2 L1413.85 145.4 L1416.5 142.2' fill='none' stroke='#3a3a3a' stroke-width='1.1'/><path d='M1459.9 142.2 L1462.6 145.4 L1465.3 142.2' fill='none' stroke='#3a3a3a' stroke-width='1.1'/><rect x='1495.7' y='87.7' width='27' height='27' rx='0' fill='none' stroke='#d83b01' stroke-width='1.4'/><rect x='1498.6' y='90.7' width='9.3' height='9.3' rx='0' fill='none' stroke='#d83b01' stroke-width='1.3'/><rect x='1510.3' y='90.7' width='9.3' height='9.3' rx='0' fill='none' stroke='#d83b01' stroke-width='1.3'/><rect x='1498.6' y='102.4' width='9.3' height='9.3' rx='0' fill='none' stroke='#d83b01' stroke-width='1.3'/><rect x='1510.3' y='102.4' width='9.3' height='9.3' rx='0' fill='none' stroke='#d83b01' stroke-width='1.3'/><path d='M1583 113 H1580.5 Q1579.3 113 1579.3 111.5 V90.5 Q1579.3 89.3 1580.5 89.3 H1594 L1598.8 94.5 V103' fill='none' stroke='#2b88d8' stroke-width='1.2'/><path d='M1587.5 94.5 Q1588.5 98 1586 102 Q1584 105 1584 104 M1588 99 Q1590 102 1594 101.3' fill='none' stroke='#2b88d8' stroke-width='1'/><path d='M1592 113 L1597 108 Q1599 106 1601.5 108 Q1603.5 110 1601.5 112 L1599 114.5 M1595.5 110 L1591 114.5 Q1589 116.5 1591 118 Q1593 119.5 1595 117.5 L1597.5 115' fill='none' stroke='#2b88d8' stroke-width='1.3'/></svg>
<div class='t' style='left:47.00px;top:18.70px;font-size:12.4px;line-height:12.4px;font-weight:400;color:#acacac;letter-spacing:-0.500px;font-family:"Liberation Sans";font-style:normal;'>2021 Sales Project BY AbdulRahman.  -  Excel</div>
<div class='t' style='left:825.00px;top:17.90px;font-size:13.2px;line-height:13.2px;font-weight:400;color:#a6a6a6;letter-spacing:-0.280px;font-family:"Liberation Sans";font-style:normal;'>Search</div>
<div class='t' style='left:21.40px;top:58.00px;font-size:12.19px;line-height:12.19px;font-weight:400;color:#3b3b3b;letter-spacing:0.067px;font-family:"Liberation Sans";font-style:normal;'>File</div>
<div class='t' style='left:123.00px;top:58.00px;font-size:12.19px;line-height:12.19px;font-weight:400;color:#3b3b3b;letter-spacing:0.380px;font-family:"Liberation Sans";font-style:normal;'>Insert</div>
<div class='t' style='left:176.40px;top:58.00px;font-size:12.19px;line-height:12.19px;font-weight:400;color:#3b3b3b;letter-spacing:0.500px;font-family:"Liberation Sans";font-style:normal;'>Draw</div>
<div class='t' style='left:228.40px;top:58.00px;font-size:12.19px;line-height:12.19px;font-weight:400;color:#3b3b3b;letter-spacing:0.280px;font-family:"Liberation Sans";font-style:normal;'>Page Layout</div>
<div class='t' style='left:321.20px;top:58.00px;font-size:12.19px;line-height:12.19px;font-weight:400;color:#3b3b3b;letter-spacing:0.257px;font-family:"Liberation Sans";font-style:normal;'>Formulas</div>
<div class='t' style='left:395.40px;top:58.00px;font-size:12.19px;line-height:12.19px;font-weight:400;color:#3b3b3b;letter-spacing:0.200px;font-family:"Liberation Sans";font-style:normal;'>Data</div>
<div class='t' style='left:443.00px;top:58.00px;font-size:12.19px;line-height:12.19px;font-weight:400;color:#3b3b3b;letter-spacing:0.200px;font-family:"Liberation Sans";font-style:normal;'>Review</div>
<div class='t' style='left:504.00px;top:58.00px;font-size:12.19px;line-height:12.19px;font-weight:400;color:#3b3b3b;letter-spacing:0.000px;font-family:"Liberation Sans";font-style:normal;'>View</div>
<div class='t' style='left:550.00px;top:58.00px;font-size:12.19px;line-height:12.19px;font-weight:400;color:#3b3b3b;letter-spacing:0.667px;font-family:"Liberation Sans";font-style:normal;'>Help</div>
<div class='t' style='left:599.00px;top:58.00px;font-size:12.19px;line-height:12.19px;font-weight:400;color:#3b3b3b;letter-spacing:0.667px;font-family:"Liberation Sans";font-style:normal;'>Acrobat</div>
<div class='t' style='left:66.50px;top:58.00px;font-size:12.6px;line-height:12.6px;font-weight:700;color:#2b2b2b;letter-spacing:0.000px;font-family:"Liberation Sans";font-style:normal;'>Home</div>
<div class='t' style='left:13.80px;top:194.50px;font-size:11.92px;line-height:11.92px;font-weight:400;color:#1a1a1a;letter-spacing:0.500px;font-family:"Liberation Sans";font-style:normal;'>S56</div>
<div class='t' style='left:184.00px;top:190.00px;font-size:16px;line-height:16px;font-weight:400;color:#222;letter-spacing:0.000px;font-family:"Liberation Serif";font-style:italic;'>f</div>
<div class='t' style='left:191.00px;top:192.00px;font-size:14px;line-height:14px;font-weight:400;color:#222;letter-spacing:0.000px;font-family:"Liberation Serif";font-style:italic;'>x</div>
<div class='t' style='left:58.50px;top:222.90px;font-size:12px;line-height:12px;font-weight:400;color:#333;letter-spacing:0.000px;font-family:"Liberation Sans";font-style:normal;'>A</div>
<div class='t' style='left:246.50px;top:222.90px;font-size:12px;line-height:12px;font-weight:400;color:#333;letter-spacing:0.000px;font-family:"Liberation Sans";font-style:normal;'>B</div>
<div class='t' style='left:489.00px;top:222.90px;font-size:12px;line-height:12px;font-weight:400;color:#333;letter-spacing:0.000px;font-family:"Liberation Sans";font-style:normal;'>C</div>
<div class='t' style='left:611.00px;top:222.90px;font-size:12px;line-height:12px;font-weight:400;color:#333;letter-spacing:0.000px;font-family:"Liberation Sans";font-style:normal;'>D</div>
<div class='t' style='left:675.00px;top:222.90px;font-size:12px;line-height:12px;font-weight:400;color:#333;letter-spacing:0.000px;font-family:"Liberation Sans";font-style:normal;'>E</div>
<div class='t' style='left:739.50px;top:222.90px;font-size:12px;line-height:12px;font-weight:400;color:#333;letter-spacing:0.000px;font-family:"Liberation Sans";font-style:normal;'>F</div>
<div class='t' style='left:803.00px;top:222.90px;font-size:12px;line-height:12px;font-weight:400;color:#333;letter-spacing:0.000px;font-family:"Liberation Sans";font-style:normal;'>G</div>
<div class='t' style='left:867.00px;top:222.90px;font-size:12px;line-height:12px;font-weight:400;color:#333;letter-spacing:0.000px;font-family:"Liberation Sans";font-style:normal;'>H</div>
<div class='t' style='left:933.50px;top:222.90px;font-size:12px;line-height:12px;font-weight:400;color:#333;letter-spacing:0.000px;font-family:"Liberation Sans";font-style:normal;'>I</div>
<div class='t' style='left:997.00px;top:222.90px;font-size:12px;line-height:12px;font-weight:400;color:#333;letter-spacing:0.000px;font-family:"Liberation Sans";font-style:normal;'>J</div>
<div class='t' style='left:1059.00px;top:222.90px;font-size:12px;line-height:12px;font-weight:400;color:#333;letter-spacing:0.000px;font-family:"Liberation Sans";font-style:normal;'>K</div>
<div class='t' style='left:1123.50px;top:222.90px;font-size:12px;line-height:12px;font-weight:400;color:#333;letter-spacing:0.000px;font-family:"Liberation Sans";font-style:normal;'>L</div>
<div class='t' style='left:1186.50px;top:222.90px;font-size:12px;line-height:12px;font-weight:400;color:#333;letter-spacing:0.000px;font-family:"Liberation Sans";font-style:normal;'>M</div>
<div class='t' style='left:1251.00px;top:222.90px;font-size:12px;line-height:12px;font-weight:400;color:#333;letter-spacing:0.000px;font-family:"Liberation Sans";font-style:normal;'>N</div>
<div class='t' style='left:1315.00px;top:222.90px;font-size:12px;line-height:12px;font-weight:400;color:#333;letter-spacing:0.000px;font-family:"Liberation Sans";font-style:normal;'>O</div>
<div class='t' style='left:1379.00px;top:222.90px;font-size:12px;line-height:12px;font-weight:400;color:#333;letter-spacing:0.000px;font-family:"Liberation Sans";font-style:normal;'>P</div>
<div class='t' style='left:1443.00px;top:222.90px;font-size:12px;line-height:12px;font-weight:400;color:#333;letter-spacing:0.000px;font-family:"Liberation Sans";font-style:normal;'>Q</div>
<div class='t' style='left:1507.00px;top:222.90px;font-size:12px;line-height:12px;font-weight:400;color:#333;letter-spacing:0.000px;font-family:"Liberation Sans";font-style:normal;'>R</div>
<div class='t' style='left:1571.00px;top:222.90px;font-size:12px;line-height:12px;font-weight:400;color:#333;letter-spacing:0.000px;font-family:"Liberation Sans";font-style:normal;'>S</div>
<div class='t' style='left:10.10px;top:261.00px;font-size:12px;line-height:12px;font-weight:400;color:#3c3c3c;letter-spacing:0.000px;font-family:"Liberation Sans";font-style:normal;'>1</div>
<div class='t' style='left:10.60px;top:298.00px;font-size:12px;line-height:12px;font-weight:400;color:#3c3c3c;letter-spacing:0.000px;font-family:"Liberation Sans";font-style:normal;'>2</div>
<div class='t' style='left:10.60px;top:335.00px;font-size:12px;line-height:12px;font-weight:400;color:#3c3c3c;letter-spacing:0.000px;font-family:"Liberation Sans";font-style:normal;'>3</div>
<div class='t' style='left:10.10px;top:372.00px;font-size:12px;line-height:12px;font-weight:400;color:#3c3c3c;letter-spacing:0.000px;font-family:"Liberation Sans";font-style:normal;'>4</div>
<div class='t' style='left:10.10px;top:409.00px;font-size:12px;line-height:12px;font-weight:400;color:#3c3c3c;letter-spacing:0.000px;font-family:"Liberation Sans";font-style:normal;'>5</div>
<div class='t' style='left:10.60px;top:429.20px;font-size:12px;line-height:12px;font-weight:400;color:#3c3c3c;letter-spacing:0.000px;font-family:"Liberation Sans";font-style:normal;'>6</div>
<div class='t' style='left:10.60px;top:449.20px;font-size:12px;line-height:12px;font-weight:400;color:#3c3c3c;letter-spacing:0.000px;font-family:"Liberation Sans";font-style:normal;'>7</div>
<div class='t' style='left:10.60px;top:469.20px;font-size:12px;line-height:12px;font-weight:400;color:#3c3c3c;letter-spacing:0.000px;font-family:"Liberation Sans";font-style:normal;'>8</div>
<div class='t' style='left:10.60px;top:489.20px;font-size:12px;line-height:12px;font-weight:400;color:#3c3c3c;letter-spacing:0.000px;font-family:"Liberation Sans";font-style:normal;'>9</div>
<div class='t' style='left:6.60px;top:509.20px;font-size:12px;line-height:12px;font-weight:400;color:#3c3c3c;letter-spacing:0.000px;font-family:"Liberation Sans";font-style:normal;'>10</div>
<div class='t' style='left:7.10px;top:529.20px;font-size:12px;line-height:12px;font-weight:400;color:#3c3c3c;letter-spacing:0.000px;font-family:"Liberation Sans";font-style:normal;'>11</div>
<div class='t' style='left:6.60px;top:549.20px;font-size:12px;line-height:12px;font-weight:400;color:#3c3c3c;letter-spacing:0.000px;font-family:"Liberation Sans";font-style:normal;'>12</div>
<div class='t' style='left:6.60px;top:569.20px;font-size:12px;line-height:12px;font-weight:400;color:#3c3c3c;letter-spacing:0.000px;font-family:"Liberation Sans";font-style:normal;'>13</div>
<div class='t' style='left:6.60px;top:589.20px;font-size:12px;line-height:12px;font-weight:400;color:#3c3c3c;letter-spacing:0.000px;font-family:"Liberation Sans";font-style:normal;'>14</div>
<div class='t' style='left:6.60px;top:609.20px;font-size:12px;line-height:12px;font-weight:400;color:#3c3c3c;letter-spacing:0.000px;font-family:"Liberation Sans";font-style:normal;'>15</div>
<div class='t' style='left:6.60px;top:629.20px;font-size:12px;line-height:12px;font-weight:400;color:#3c3c3c;letter-spacing:0.000px;font-family:"Liberation Sans";font-style:normal;'>16</div>
<div class='t' style='left:6.60px;top:649.20px;font-size:12px;line-height:12px;font-weight:400;color:#3c3c3c;letter-spacing:0.000px;font-family:"Liberation Sans";font-style:normal;'>17</div>
<div class='t' style='left:6.60px;top:669.20px;font-size:12px;line-height:12px;font-weight:400;color:#3c3c3c;letter-spacing:0.000px;font-family:"Liberation Sans";font-style:normal;'>18</div>
<div class='t' style='left:6.60px;top:689.20px;font-size:12px;line-height:12px;font-weight:400;color:#3c3c3c;letter-spacing:0.000px;font-family:"Liberation Sans";font-style:normal;'>19</div>
<div class='t' style='left:7.10px;top:709.20px;font-size:12px;line-height:12px;font-weight:400;color:#3c3c3c;letter-spacing:0.000px;font-family:"Liberation Sans";font-style:normal;'>20</div>
<div class='t' style='left:7.10px;top:729.20px;font-size:12px;line-height:12px;font-weight:400;color:#3c3c3c;letter-spacing:0.000px;font-family:"Liberation Sans";font-style:normal;'>21</div>
<div class='t' style='left:7.10px;top:749.20px;font-size:12px;line-height:12px;font-weight:400;color:#3c3c3c;letter-spacing:0.000px;font-family:"Liberation Sans";font-style:normal;'>22</div>
<div class='t' style='left:7.10px;top:769.20px;font-size:12px;line-height:12px;font-weight:400;color:#3c3c3c;letter-spacing:0.000px;font-family:"Liberation Sans";font-style:normal;'>23</div>
<div class='t' style='left:7.10px;top:789.20px;font-size:12px;line-height:12px;font-weight:400;color:#3c3c3c;letter-spacing:0.000px;font-family:"Liberation Sans";font-style:normal;'>24</div>
<div class='t' style='left:7.10px;top:809.20px;font-size:12px;line-height:12px;font-weight:400;color:#3c3c3c;letter-spacing:0.000px;font-family:"Liberation Sans";font-style:normal;'>25</div>
<div class='t' style='left:7.10px;top:829.20px;font-size:12px;line-height:12px;font-weight:400;color:#3c3c3c;letter-spacing:0.000px;font-family:"Liberation Sans";font-style:normal;'>26</div>
<div class='t' style='left:7.10px;top:849.20px;font-size:12px;line-height:12px;font-weight:400;color:#3c3c3c;letter-spacing:0.000px;font-family:"Liberation Sans";font-style:normal;'>27</div>
<div class='t' style='left:7.10px;top:869.20px;font-size:12px;line-height:12px;font-weight:400;color:#3c3c3c;letter-spacing:0.000px;font-family:"Liberation Sans";font-style:normal;'>28</div>
<div class='t' style='left:7.10px;top:889.20px;font-size:12px;line-height:12px;font-weight:400;color:#3c3c3c;letter-spacing:0.000px;font-family:"Liberation Sans";font-style:normal;'>29</div>
<div class='t' style='left:7.10px;top:909.20px;font-size:12px;line-height:12px;font-weight:400;color:#3c3c3c;letter-spacing:0.000px;font-family:"Liberation Sans";font-style:normal;'>30</div>
<div class='t' style='left:7.10px;top:929.20px;font-size:12px;line-height:12px;font-weight:400;color:#3c3c3c;letter-spacing:0.000px;font-family:"Liberation Sans";font-style:normal;'>31</div>
<div class='t' style='left:7.10px;top:949.20px;font-size:12px;line-height:12px;font-weight:400;color:#3c3c3c;letter-spacing:0.000px;font-family:"Liberation Sans";font-style:normal;'>32</div>
<div class='t' style='left:7.10px;top:969.20px;font-size:12px;line-height:12px;font-weight:400;color:#3c3c3c;letter-spacing:0.000px;font-family:"Liberation Sans";font-style:normal;'>33</div>
<div class='t' style='left:41.10px;top:251.00px;font-size:16.71px;line-height:16.71px;font-weight:700;color:#fff;letter-spacing:0.133px;font-family:"Liberation Sans";font-style:normal;'>Team</div>
<div class='t' style='left:228.20px;top:251.00px;font-size:16.71px;line-height:16.71px;font-weight:700;color:#fff;letter-spacing:0.400px;font-family:"Liberation Sans";font-style:normal;'>Sales</div>
<div class='t' style='left:444.40px;top:251.00px;font-size:16.71px;line-height:16.71px;font-weight:700;color:#fff;letter-spacing:-0.322px;font-family:"Liberation Sans";font-style:normal;'>Commission</div>
<div class='t' style='left:45.40px;top:287.80px;font-size:13.3px;line-height:13.3px;font-weight:400;color:#000;letter-spacing:0.950px;font-family:"Liberation Sans";font-style:normal;'>North</div>
<div class='t' style='left:108.00px;top:287.80px;font-size:13.3px;line-height:13.3px;font-weight:400;color:#000;letter-spacing:0.000px;font-family:"Liberation Sans";font-style:normal;'>$</div>
<div class='t' style='left:319.30px;top:287.80px;font-size:13.3px;line-height:13.3px;font-weight:400;color:#000;letter-spacing:-0.164px;font-family:"Liberation Sans";font-style:normal;'>1,945,833.20</div>
<div class='t' style='left:411.10px;top:287.80px;font-size:13.3px;line-height:13.3px;font-weight:400;color:#000;letter-spacing:0.000px;font-family:"Liberation Sans";font-style:normal;'>$</div>
<div class='t' style='left:511.40px;top:287.80px;font-size:13.3px;line-height:13.3px;font-weight:400;color:#000;letter-spacing:-0.211px;font-family:"Liberation Sans";font-style:normal;'>157,168.13</div>
<div class='t' style='left:45.40px;top:324.80px;font-size:13.3px;line-height:13.3px;font-weight:400;color:#000;letter-spacing:0.550px;font-family:"Liberation Sans";font-style:normal;'>South</div>
<div class='t' style='left:108.00px;top:324.80px;font-size:13.3px;line-height:13.3px;font-weight:400;color:#000;letter-spacing:0.000px;font-family:"Liberation Sans";font-style:normal;'>$</div>
<div class='t' style='left:319.30px;top:324.80px;font-size:13.3px;line-height:13.3px;font-weight:400;color:#000;letter-spacing:-0.164px;font-family:"Liberation Sans";font-style:normal;'>1,812,496.30</div>
<div class='t' style='left:411.10px;top:324.80px;font-size:13.3px;line-height:13.3px;font-weight:400;color:#000;letter-spacing:0.000px;font-family:"Liberation Sans";font-style:normal;'>$</div>
<div class='t' style='left:511.40px;top:324.80px;font-size:13.3px;line-height:13.3px;font-weight:400;color:#000;letter-spacing:-0.211px;font-family:"Liberation Sans";font-style:normal;'>138,552.42</div>
<div class='t' style='left:45.40px;top:361.80px;font-size:13.3px;line-height:13.3px;font-weight:400;color:#000;letter-spacing:-0.733px;font-family:"Liberation Sans";font-style:normal;'>East</div>
<div class='t' style='left:108.00px;top:361.80px;font-size:13.3px;line-height:13.3px;font-weight:400;color:#000;letter-spacing:0.000px;font-family:"Liberation Sans";font-style:normal;'>$</div>
<div class='t' style='left:319.30px;top:361.80px;font-size:13.3px;line-height:13.3px;font-weight:400;color:#000;letter-spacing:-0.164px;font-family:"Liberation Sans";font-style:normal;'>1,805,833.60</div>
<div class='t' style='left:411.10px;top:361.80px;font-size:13.3px;line-height:13.3px;font-weight:400;color:#000;letter-spacing:0.000px;font-family:"Liberation Sans";font-style:normal;'>$</div>
<div class='t' style='left:511.40px;top:361.80px;font-size:13.3px;line-height:13.3px;font-weight:400;color:#000;letter-spacing:-0.211px;font-family:"Liberation Sans";font-style:normal;'>147,698.53</div>
<div class='t' style='left:46.40px;top:398.80px;font-size:13.3px;line-height:13.3px;font-weight:400;color:#000;letter-spacing:0.633px;font-family:"Liberation Sans";font-style:normal;'>West</div>
<div class='t' style='left:108.00px;top:398.80px;font-size:13.3px;line-height:13.3px;font-weight:400;color:#000;letter-spacing:0.000px;font-family:"Liberation Sans";font-style:normal;'>$</div>
<div class='t' style='left:319.30px;top:398.80px;font-size:13.3px;line-height:13.3px;font-weight:400;color:#000;letter-spacing:-0.164px;font-family:"Liberation Sans";font-style:normal;'>1,722,387.90</div>
<div class='t' style='left:411.10px;top:398.80px;font-size:13.3px;line-height:13.3px;font-weight:400;color:#000;letter-spacing:0.000px;font-family:"Liberation Sans";font-style:normal;'>$</div>
<div class='t' style='left:511.40px;top:398.80px;font-size:13.3px;line-height:13.3px;font-weight:400;color:#000;letter-spacing:-0.211px;font-family:"Liberation Sans";font-style:normal;'>128,660.96</div>
<div class='t' style='left:1441.30px;top:251.10px;font-size:13.7px;line-height:13.7px;font-weight:700;color:#1257a8;letter-spacing:0.206px;font-family:"Liberation Sans";font-style:normal;'>Back To Cover Sheet</div>
<div class='t' style='left:722.80px;top:747.00px;font-size:11.2px;line-height:11.2px;font-weight:400;color:#595959;letter-spacing:1.200px;font-family:"Liberation Sans";font-style:normal;-webkit-text-stroke:0.3px #595959;'>$-</div>
<div class='t' style='left:672.00px;top:721.00px;font-size:11.2px;line-height:11.2px;font-weight:400;color:#595959;letter-spacing:0.530px;font-family:"Liberation Sans";font-style:normal;-webkit-text-stroke:0.3px #595959;'>$200,000.00</div>
<div class='t' style='left:672.00px;top:694.00px;font-size:11.2px;line-height:11.2px;font-weight:400;color:#595959;letter-spacing:0.530px;font-family:"Liberation Sans";font-style:normal;-webkit-text-stroke:0.3px #595959;'>$400,000.00</div>
<div class='t' style='left:672.00px;top:667.00px;font-size:11.2px;line-height:11.2px;font-weight:400;color:#595959;letter-spacing:0.530px;font-family:"Liberation Sans";font-style:normal;-webkit-text-stroke:0.3px #595959;'>$600,000.00</div>
<div class='t' style='left:672.00px;top:640.00px;font-size:11.2px;line-height:11.2px;font-weight:400;color:#595959;letter-spacing:0.530px;font-family:"Liberation Sans";font-style:normal;-webkit-text-stroke:0.3px #595959;'>$800,000.00</div>
<div class='t' style='left:661.80px;top:613.00px;font-size:11.2px;line-height:11.2px;font-weight:400;color:#595959;letter-spacing:0.542px;font-family:"Liberation Sans";font-style:normal;-webkit-text-stroke:0.3px #595959;'>$1,000,000.00</div>
<div class='t' style='left:661.80px;top:586.00px;font-size:11.2px;line-height:11.2px;font-weight:400;color:#595959;letter-spacing:0.542px;font-family:"Liberation Sans";font-style:normal;-webkit-text-stroke:0.3px #595959;'>$1,200,000.00</div>
<div class='t' style='left:661.80px;top:559.00px;font-size:11.2px;line-height:11.2px;font-weight:400;color:#595959;letter-spacing:0.542px;font-family:"Liberation Sans";font-style:normal;-webkit-text-stroke:0.3px #595959;'>$1,400,000.00</div>
<div class='t' style='left:661.80px;top:532.00px;font-size:11.2px;line-height:11.2px;font-weight:400;color:#595959;letter-spacing:0.542px;font-family:"Liberation Sans";font-style:normal;-webkit-text-stroke:0.3px #595959;'>$1,600,000.00</div>
<div class='t' style='left:661.80px;top:505.00px;font-size:11.2px;line-height:11.2px;font-weight:400;color:#595959;letter-spacing:0.542px;font-family:"Liberation Sans";font-style:normal;-webkit-text-stroke:0.3px #595959;'>$1,800,000.00</div>
<div class='t' style='left:661.80px;top:478.00px;font-size:11.2px;line-height:11.2px;font-weight:400;color:#595959;letter-spacing:0.542px;font-family:"Liberation Sans";font-style:normal;-webkit-text-stroke:0.3px #595959;'>$2,000,000.00</div>
<div class='t' style='left:661.80px;top:451.00px;font-size:11.2px;line-height:11.2px;font-weight:400;color:#595959;letter-spacing:0.542px;font-family:"Liberation Sans";font-style:normal;-webkit-text-stroke:0.3px #595959;'>$2,200,000.00</div>
<div class='t' style='left:807.70px;top:766.00px;font-size:13.7px;line-height:13.7px;font-weight:700;color:#595959;letter-spacing:0.575px;font-family:"Liberation Sans";font-style:normal;'>North</div>
<div class='t' style='left:951.60px;top:766.00px;font-size:13.7px;line-height:13.7px;font-weight:700;color:#595959;letter-spacing:0.200px;font-family:"Liberation Sans";font-style:normal;'>South</div>
<div class='t' style='left:1102.30px;top:766.00px;font-size:13.7px;line-height:13.7px;font-weight:700;color:#595959;letter-spacing:-0.533px;font-family:"Liberation Sans";font-style:normal;'>East</div>
<div class='t' style='left:1244.00px;top:766.00px;font-size:13.7px;line-height:13.7px;font-weight:700;color:#595959;letter-spacing:0.400px;font-family:"Liberation Sans";font-style:normal;'>West</div>
<div class='t' style='left:939.20px;top:421.00px;font-size:20.27px;line-height:20.27px;font-weight:700;color:#636363;letter-spacing:-0.500px;font-family:"Liberation Sans";font-style:normal;'>Sales 2021</div>
<div class='t' style='left:936.00px;top:797.90px;font-size:13.01px;line-height:13.01px;font-weight:700;color:#595959;letter-spacing:-0.075px;font-family:"Liberation Sans";font-style:normal;'>Sales</div>
<div class='t' style='left:998.70px;top:797.90px;font-size:13.01px;line-height:13.01px;font-weight:700;color:#595959;letter-spacing:0.322px;font-family:"Liberation Sans";font-style:normal;'>Commission</div>
<div class='t' style='left:123.80px;top:987.60px;font-size:13.15px;line-height:13.15px;font-weight:400;color:#fff;letter-spacing:0.222px;font-family:"Liberation Sans";font-style:normal;z-index:4;'>Cover Page</div>
<div class='t' style='left:222.30px;top:987.60px;font-size:13.15px;line-height:13.15px;font-weight:400;color:#1a1a1a;letter-spacing:-0.125px;font-family:"Liberation Sans";font-style:normal;z-index:4;'>All Sales</div>
<div class='t' style='left:298.30px;top:987.60px;font-size:13.15px;line-height:13.15px;font-weight:400;color:#2a2a2a;letter-spacing:1.150px;font-family:"Liberation Sans";font-style:normal;z-index:4;'>North</div>
<div class='t' style='left:360.00px;top:987.60px;font-size:13.15px;line-height:13.15px;font-weight:400;color:#2a2a2a;letter-spacing:0.675px;font-family:"Liberation Sans";font-style:normal;z-index:4;'>South</div>
<div class='t' style='left:423.00px;top:987.60px;font-size:13.15px;line-height:13.15px;font-weight:400;color:#2a2a2a;letter-spacing:-0.367px;font-family:"Liberation Sans";font-style:normal;z-index:4;'>East</div>
<div class='t' style='left:474.80px;top:987.60px;font-size:13.15px;line-height:13.15px;font-weight:400;color:#2a2a2a;letter-spacing:0.300px;font-family:"Liberation Sans";font-style:normal;z-index:4;'>West</div>
<div class='t' style='left:531.90px;top:987.60px;font-size:13.15px;line-height:13.15px;font-weight:400;color:#2a2a2a;letter-spacing:0.288px;font-family:"Liberation Sans";font-style:normal;z-index:4;'>Copy of All Sales</div>
<div class='t' style='left:833.30px;top:987.60px;font-size:13.15px;line-height:13.15px;font-weight:400;color:#2a2a2a;letter-spacing:0.425px;font-family:"Liberation Sans";font-style:normal;z-index:4;'>New Staff</div>
<div class='t' style='left:662.30px;top:985.30px;font-size:13.15px;line-height:13.15px;font-weight:700;color:#1a1a1a;letter-spacing:-0.075px;font-family:"Liberation Sans";font-style:normal;z-index:4;'>Chart</div>
<div class='t' style='left:721.30px;top:987.60px;font-size:13.15px;line-height:13.15px;font-weight:400;color:#2a2a2a;letter-spacing:-0.038px;font-family:"Liberation Sans";font-style:normal;z-index:4;'>Sales Analysis</div>
<div class='t' style='left:11.60px;top:1015.00px;font-size:11.64px;line-height:11.64px;font-weight:400;color:#3a3a3a;letter-spacing:-0.700px;font-family:"Liberation Sans";font-style:normal;z-index:4;'>Ready</div>
<div class='t' style='left:80.60px;top:1015.00px;font-size:11.64px;line-height:11.64px;font-weight:700;color:#262626;letter-spacing:-0.560px;font-family:"Liberation Sans";font-style:normal;z-index:4;'>Accessibility: Investigate</div>
<div class='t' style='left:711.70px;top:981.60px;font-size:28px;line-height:28px;font-weight:400;color:rgba(0,0,0,0.07);letter-spacing:3.630px;font-family:"Liberation Sans";font-style:normal;z-index:6;'>mostaql.com</div>
<div class='t' style='left:26.40px;top:123.50px;font-size:11.5px;line-height:11.5px;font-weight:400;color:#a6a6a6;letter-spacing:-0.100px;font-family:"Liberation Sans";font-style:normal;'>Paste</div>
<div class='t' style='left:88.60px;top:89.70px;font-size:11.8px;line-height:11.8px;font-weight:400;color:#242424;letter-spacing:0.150px;font-family:"Liberation Sans";font-style:normal;'>Cut</div>
<div class='t' style='left:88.60px;top:116.00px;font-size:11.8px;line-height:11.8px;font-weight:400;color:#242424;letter-spacing:-0.333px;font-family:"Liberation Sans";font-style:normal;'>Copy</div>
<div class='t' style='left:87.60px;top:141.60px;font-size:11.8px;line-height:11.8px;font-weight:400;color:#242424;letter-spacing:0.031px;font-family:"Liberation Sans";font-style:normal;'>Format Painter</div>
<div class='t' style='left:64.60px;top:163.00px;font-size:11.3px;line-height:11.3px;font-weight:400;color:#3d3d3d;letter-spacing:0.263px;font-family:"Liberation Sans";font-style:normal;'>Clipboard</div>
<div class='t' style='left:194.40px;top:96.00px;font-size:12.3px;line-height:12.3px;font-weight:400;color:#1a1a1a;letter-spacing:-0.100px;font-family:"Liberation Sans";font-style:normal;'>Calibri</div>
<div class='t' style='left:318.40px;top:96.00px;font-size:12.3px;line-height:12.3px;font-weight:400;color:#1a1a1a;letter-spacing:0.000px;font-family:"Liberation Sans";font-style:normal;'>11</div>
<div class='t' style='left:366.00px;top:92.70px;font-size:16.5px;line-height:16.5px;font-weight:400;color:#3a3a3a;letter-spacing:0.000px;font-family:"Liberation Sans";font-style:normal;'>A</div>
<div class='t' style='left:393.60px;top:96.70px;font-size:12.6px;line-height:12.6px;font-weight:400;color:#3a3a3a;letter-spacing:0.000px;font-family:"Liberation Sans";font-style:normal;'>A</div>
<div class='t' style='left:198.30px;top:126.50px;font-size:13px;line-height:13px;font-weight:700;color:#2b2b2b;letter-spacing:0.000px;font-family:"Liberation Sans";font-style:normal;'>B</div>
<div class='t' style='left:226.00px;top:126.50px;font-size:13px;line-height:13px;font-weight:400;color:#2b2b2b;letter-spacing:0.000px;font-family:"Liberation Serif";font-style:italic;'>I</div>
<div class='t' style='left:248.70px;top:127.50px;font-size:12.5px;line-height:12.5px;font-weight:400;color:#2b2b2b;letter-spacing:0.000px;font-family:"Liberation Sans";font-style:normal;'>U</div>
<div class='t' style='left:376.50px;top:124.80px;font-size:14.5px;line-height:14.5px;font-weight:400;color:#3a3a3a;letter-spacing:0.000px;font-family:"Liberation Sans";font-style:normal;'>A</div>
<div class='t' style='left:280.60px;top:162.20px;font-size:11.3px;line-height:11.3px;font-weight:400;color:#3d3d3d;letter-spacing:0.467px;font-family:"Liberation Sans";font-style:normal;'>Font</div>
<div class='t' style='left:511.50px;top:95.00px;font-size:10px;line-height:10px;font-weight:400;color:#3a3a3a;letter-spacing:0.500px;font-family:"Liberation Sans";font-style:normal;transform:rotate(-45deg);transform-origin:50% 50%;'>ab</div>
<div class='t' style='left:564.50px;top:96.50px;font-size:11px;line-height:11px;font-weight:700;color:#3a3a3a;letter-spacing:0.000px;font-family:"Liberation Sans";font-style:normal;'>¶</div>
<div class='t' style='left:611.10px;top:93.50px;font-size:9.5px;line-height:9.5px;font-weight:400;color:#3a3a3a;letter-spacing:0.000px;font-family:"Liberation Sans";font-style:normal;'>ab</div>
<div class='t' style='left:611.10px;top:101.90px;font-size:8.5px;line-height:8.5px;font-weight:400;color:#3a3a3a;letter-spacing:0.000px;font-family:"Liberation Sans";font-style:normal;'>c</div>
<div class='t' style='left:629.30px;top:98.30px;font-size:11.8px;line-height:11.8px;font-weight:400;color:#242424;letter-spacing:-0.225px;font-family:"Liberation Sans";font-style:normal;'>Wrap Text</div>
<div class='t' style='left:628.30px;top:129.60px;font-size:11.8px;line-height:11.8px;font-weight:400;color:#242424;letter-spacing:0.169px;font-family:"Liberation Sans";font-style:normal;'>Merge &amp; Center</div>
<div class='t' style='left:552.50px;top:162.70px;font-size:11.3px;line-height:11.3px;font-weight:400;color:#3d3d3d;letter-spacing:0.225px;font-family:"Liberation Sans";font-style:normal;'>Alignment</div>
<div class='t' style='left:766.70px;top:95.80px;font-size:12px;line-height:12px;font-weight:400;color:#1a1a1a;letter-spacing:-0.517px;font-family:"Liberation Sans";font-style:normal;'>General</div>
<div class='t' style='left:770.60px;top:125.20px;font-size:16.5px;line-height:16.5px;font-weight:400;color:#444;letter-spacing:0.000px;font-family:"Liberation Sans";font-style:normal;transform:scaleX(0.8);transform-origin:0 0;'>$</div>
<div class='t' style='left:808.40px;top:125.50px;font-size:18px;line-height:18px;font-weight:400;color:#444;letter-spacing:0.000px;font-family:"Liberation Sans";font-style:normal;'>%</div>
<div class='t' style='left:872.00px;top:126.50px;font-size:8.5px;line-height:8.5px;font-weight:400;color:#3a3a3a;letter-spacing:0.000px;font-family:"Liberation Sans";font-style:normal;'>0</div>
<div class='t' style='left:865.00px;top:134.00px;font-size:8.5px;line-height:8.5px;font-weight:400;color:#3a3a3a;letter-spacing:0.500px;font-family:"Liberation Sans";font-style:normal;'>.00</div>
<div class='t' style='left:891.00px;top:126.50px;font-size:8.5px;line-height:8.5px;font-weight:400;color:#3a3a3a;letter-spacing:0.500px;font-family:"Liberation Sans";font-style:normal;'>.00</div>
<div class='t' style='left:896.00px;top:134.00px;font-size:8.5px;line-height:8.5px;font-weight:400;color:#3a3a3a;letter-spacing:1.000px;font-family:"Liberation Sans";font-style:normal;'>.0</div>
<div class='t' style='left:806.60px;top:162.80px;font-size:11.3px;line-height:11.3px;font-weight:400;color:#3d3d3d;letter-spacing:0.260px;font-family:"Liberation Sans";font-style:normal;'>Number</div>
<div class='t' style='left:931.50px;top:122.70px;font-size:11.8px;line-height:11.8px;font-weight:400;color:#242424;letter-spacing:0.200px;font-family:"Liberation Sans";font-style:normal;'>Conditional</div>
<div class='t' style='left:926.70px;top:138.40px;font-size:11.8px;line-height:11.8px;font-weight:400;color:#242424;letter-spacing:0.289px;font-family:"Liberation Sans";font-style:normal;'>Formatting</div>
<div class='t' style='left:1003.60px;top:122.70px;font-size:11.8px;line-height:11.8px;font-weight:400;color:#242424;letter-spacing:-0.087px;font-family:"Liberation Sans";font-style:normal;'>Format as</div>
<div class='t' style='left:1012.00px;top:138.40px;font-size:11.8px;line-height:11.8px;font-weight:400;color:#242424;letter-spacing:-0.250px;font-family:"Liberation Sans";font-style:normal;'>Table</div>
<div class='t' style='left:1074.60px;top:122.70px;font-size:11.8px;line-height:11.8px;font-weight:400;color:#242424;letter-spacing:-0.333px;font-family:"Liberation Sans";font-style:normal;'>Cell</div>
<div class='t' style='left:1062.20px;top:138.40px;font-size:11.8px;line-height:11.8px;font-weight:400;color:#242424;letter-spacing:-0.240px;font-family:"Liberation Sans";font-style:normal;'>Styles</div>
<div class='t' style='left:1000.50px;top:162.20px;font-size:11.3px;line-height:11.3px;font-weight:400;color:#3d3d3d;letter-spacing:-0.220px;font-family:"Liberation Sans";font-style:normal;'>Styles</div>
<div class='t' style='left:1128.40px;top:123.70px;font-size:11.8px;line-height:11.8px;font-weight:400;color:#242424;letter-spacing:-0.120px;font-family:"Liberation Sans";font-style:normal;'>Insert</div>
<div class='t' style='left:1170.70px;top:123.70px;font-size:11.8px;line-height:11.8px;font-weight:400;color:#242424;letter-spacing:-0.140px;font-family:"Liberation Sans";font-style:normal;'>Delete</div>
<div class='t' style='left:1212.80px;top:123.70px;font-size:11.8px;line-height:11.8px;font-weight:400;color:#242424;letter-spacing:0.200px;font-family:"Liberation Sans";font-style:normal;'>Format</div>
<div class='t' style='left:1176.70px;top:162.40px;font-size:11.3px;line-height:11.3px;font-weight:400;color:#3d3d3d;letter-spacing:-0.550px;font-family:"Liberation Sans";font-style:normal;'>Cells</div>
<div class='t' style='left:1294.40px;top:90.00px;font-size:11.8px;line-height:11.8px;font-weight:400;color:#242424;letter-spacing:0.133px;font-family:"Liberation Sans";font-style:normal;'>AutoSum</div>
<div class='t' style='left:1293.40px;top:115.60px;font-size:11.8px;line-height:11.8px;font-weight:400;color:#242424;letter-spacing:-0.033px;font-family:"Liberation Sans";font-style:normal;'>Fill</div>
<div class='t' style='left:1294.40px;top:141.70px;font-size:11.8px;line-height:11.8px;font-weight:400;color:#242424;letter-spacing:-0.400px;font-family:"Liberation Sans";font-style:normal;'>Clear</div>
<div class='t' style='left:1385.80px;top:87.70px;font-size:14.5px;line-height:14.5px;font-weight:400;color:#2b88d8;letter-spacing:0.000px;font-family:"Liberation Sans";font-style:normal;'>A</div>
<div class='t' style='left:1386.00px;top:101.70px;font-size:14.5px;line-height:14.5px;font-weight:400;color:#3a3a3a;letter-spacing:0.000px;font-family:"Liberation Sans";font-style:normal;'>Z</div>
<div class='t' style='left:1382.00px;top:122.70px;font-size:11.8px;line-height:11.8px;font-weight:400;color:#242424;letter-spacing:0.400px;font-family:"Liberation Sans";font-style:normal;'>Sort &amp;</div>
<div class='t' style='left:1380.40px;top:138.60px;font-size:11.8px;line-height:11.8px;font-weight:400;color:#242424;letter-spacing:0.080px;font-family:"Liberation Sans";font-style:normal;'>Filter</div>
<div class='t' style='left:1427.30px;top:122.70px;font-size:11.8px;line-height:11.8px;font-weight:400;color:#242424;letter-spacing:0.480px;font-family:"Liberation Sans";font-style:normal;'>Find &amp;</div>
<div class='t' style='left:1424.20px;top:138.60px;font-size:11.8px;line-height:11.8px;font-weight:400;color:#242424;letter-spacing:-0.280px;font-family:"Liberation Sans";font-style:normal;'>Select</div>
<div class='t' style='left:1350.80px;top:162.80px;font-size:11.3px;line-height:11.3px;font-weight:400;color:#3d3d3d;letter-spacing:0.433px;font-family:"Liberation Sans";font-style:normal;'>Editing</div>
<div class='t' style='left:1488.30px;top:123.00px;font-size:11.8px;line-height:11.8px;font-weight:400;color:#242424;letter-spacing:0.317px;font-family:"Liberation Sans";font-style:normal;'>Add-ins</div>
<div class='t' style='left:1489.20px;top:162.90px;font-size:11.3px;line-height:11.3px;font-weight:400;color:#3d3d3d;letter-spacing:0.233px;font-family:"Liberation Sans";font-style:normal;'>Add-ins</div>
<div class='t' style='left:1559.80px;top:123.00px;font-size:11.8px;line-height:11.8px;font-weight:400;color:#242424;letter-spacing:-0.600px;font-family:"Liberation Sans";font-style:normal;'>Create PDF</div>
<div class='t' style='left:1551.50px;top:139.00px;font-size:11.8px;line-height:11.8px;font-weight:400;color:#242424;letter-spacing:0.000px;font-family:"Liberation Sans";font-style:normal;'>and Share link</div>
<div class='t' style='left:1600.00px;top:162.90px;font-size:11.3px;line-height:11.3px;font-weight:400;color:#3d3d3d;letter-spacing:0.000px;font-family:"Liberation Sans";font-style:normal;'>Add-ins</div>
</body></html>
